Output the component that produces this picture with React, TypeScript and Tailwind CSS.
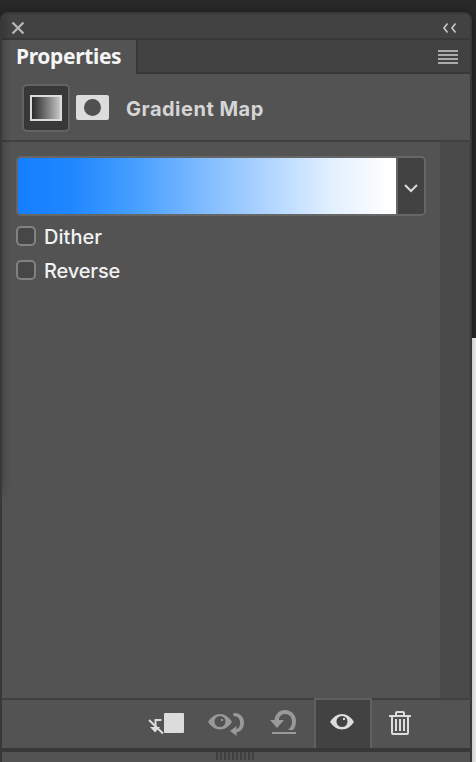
import React from 'react';

function MaskIcon() {
  return (
    <div className="ml-1.5 flex h-[25px] w-[33px] items-center justify-center rounded-[2px] bg-[#dcdcdc]">
      <div className="size-[17px] rounded-full bg-[#505050]" />
    </div>
  );
}

function Option({ label, className }: { label: string; className: string }) {
  return (
    <div className="flex h-[34px] items-center">
      <span className="size-5 rounded-[5px] border-2 border-[#828282] bg-[#474747]" />
      <span className={`mt-[2px] ml-2 text-[20px] leading-[34px] font-medium text-[#f2f2f2] ${className}`}>{label}</span>
    </div>
  );
}

function ClipIcon() {
  return (
    <svg className="h-[48px] w-[42px]" viewBox="146 700 42 48" fill="none">
      <rect x="164" y="713" width="20" height="20" rx="1" fill="#dcdcdc" />
      <path d="M161.5 720H155.5V728" stroke="#dcdcdc" strokeWidth="2" />
      <path d="M149 720L163 733.5" stroke="#dcdcdc" strokeWidth="2" />
      <path d="M150 727H160L155 732.5Z" fill="#dcdcdc" />
    </svg>
  );
}

function PreviousIcon() {
  return (
    <svg className="h-[48px] w-[42px]" viewBox="206 700 42 48" fill="none">
      <path fill="#999" d="M208 722Q213 714 220 714T232 722Q227 729.5 220 729.5T208 722Z" />
      <circle cx="220" cy="721.5" r="5.5" fill="#535353" />
      <rect x="221" y="719" width="2" height="2" fill="#999" />
      <path fill="#999" d="M233.5 713C240 712.5 244 717 244 722.5C244 728 241 731.5 236.5 732.5V736L230 731L236.5 726V729.5C239.5 728 240.5 725 240 721.5C239.5 718 237.5 716.2 233.5 716Z" />
    </svg>
  );
}

function ResetIcon() {
  return (
    <svg className="h-[48px] w-[34px]" viewBox="268 700 34 48" fill="none">
      <path fill="#999" d="M270 720H274.5C275 714 279.5 710 285 710C291.5 710 296 715 296 721C296 725 295 728 293 730H288C291 727.5 292 725 292 721C292 717 289 714 285 714C281.5 714 279 716.5 279 720H284L277 728Z" />
      <path d="M272 733H296" stroke="#999" strokeWidth="2" />
    </svg>
  );
}

function EyeIcon() {
  return (
    <svg className="h-6 w-7" viewBox="328 710 28 24" fill="none">
      <path fill="#dcdcdc" d="M330 722Q335 714 342 714T354 722Q349 729.5 342 729.5T330 722Z" />
      <circle cx="342" cy="721.5" r="5.5" fill="#424242" />
      <rect x="343" y="718" width="2" height="2" fill="#dcdcdc" />
    </svg>
  );
}

function TrashIcon() {
  return (
    <svg className="ml-[15px] h-[48px] w-[26px]" viewBox="387 700 26 48" fill="none" stroke="#dcdcdc" strokeWidth="2">
      <path d="M389 716H411M396 715.5V713Q396 712 397 712H403Q404 712 404 713V715.5M392 717V733Q392 734 393 734H407Q408 734 408 733V717" />
      <path d="M396 719V731M400 719V731M404 719V731" />
    </svg>
  );
}

export default function App() {
  return (
    <div className="relative flex h-[762px] w-[476px] overflow-hidden bg-[#292929] pt-3 font-['Inter','Liberation_Sans',sans-serif]">
      <div className="relative flex h-[750px] w-[472px] flex-col overflow-hidden rounded-t-[8px] border-x-2 border-t-2 border-[#383838] bg-[#535353] shadow-[0_0_8px_#1b1b1b]">
        <div className="pointer-events-none absolute top-0 left-0 h-[490px] w-2 bg-gradient-to-r from-black/15 to-transparent [mask-image:linear-gradient(to_bottom,black_94%,transparent)]" />
        <header className="flex h-[26px] shrink-0 items-center justify-between border-b-2 border-[#383838] bg-[#424242] pr-3 pl-[9px]">
          <svg className="mt-1 size-[14px]" viewBox="0 0 14 14" fill="none" stroke="#b5b5b5" strokeWidth="2.4">
            <path d="M1.5 1.5L12.5 12.5M12.5 1.5L1.5 12.5" />
          </svg>
          <svg className="mt-[3px] mr-[1px] h-3 w-4" viewBox="0 0 16 12" fill="none" stroke="#c4c4c4" strokeWidth="1.7">
            <path d="M6.5 1.5L3 6L6.5 10.5M14.5 1.5L11 6L14.5 10.5" />
          </svg>
        </header>
        <nav className="flex h-[34px] shrink-0">
          <div className="h-[34px] w-[134px] pl-[14px] font-['Noto_Sans','Open_Sans',sans-serif] text-[21px] leading-[32px] font-bold tracking-[-0.35px] text-[#f5f5f5]">Properties</div>
          <div className="flex flex-1 justify-end border-b-2 border-l-2 border-[#383838] bg-[#424242] pt-[10px] pr-3">
            <div className="flex h-[14px] w-5 flex-col justify-between">
              {[0, 1, 2, 3].map((n) => <span key={n} className="h-[2px] bg-[#aaa]" />)}
            </div>
          </div>
        </nav>
        <section className="flex h-[68px] shrink-0 items-start border-b-2 border-[#404040] pt-[10px] pl-5">
          <div className="flex size-12 items-center justify-center rounded-[5px] border-2 border-[#636363] bg-[#383838]">
            <div className="h-[26px] w-8 border-2 border-[#dcdcdc] bg-gradient-to-r from-[#2b2b2b] to-[#c8c8c8]" />
          </div>
          <div className="mt-[11px]"><MaskIcon /></div>
          <h1 className="mt-[13px] ml-[17px] text-[20px] leading-6 font-bold tracking-[0.5px] text-[#d5d5d5]">Gradient Map</h1>
        </section>
        <main className="flex h-[556px] shrink-0">
          <div className="flex-1 pt-[14px] pl-[14px]">
            <div className="flex h-[60px] w-[410px] overflow-hidden rounded-[5px] border-2 border-[#666]">
              <div className="w-[378px] bg-[linear-gradient(90deg,#147fff_0%,#1f87ff_14%,#479fff_31%,#82bdff_50%,#b6d8ff_68%,#e2f0ff_83%,#fff_98%)]" />
              <div className="flex flex-1 items-center justify-center border-l-2 border-[#666] bg-[#424242]">
                <svg className="mt-1 h-[10px] w-4" viewBox="0 0 16 10" fill="none" stroke="#dcdcdc" strokeWidth="2"><path d="M2 2L8 8L14 2" /></svg>
              </div>
            </div>
            <div className="pt-[3px]">
              <Option label="Dither" className="tracking-[0.05px]" />
              <Option label="Reverse" className="tracking-[-0.15px]" />
            </div>
          </div>
          <div className="w-[30px] bg-[#4a4a4a]" />
        </main>
        <footer className="flex h-[54px] shrink-0 border-t-2 border-b-4 border-t-[#404040] border-b-[#383838] pl-36">
          <ClipIcon />
          <div className="ml-[18px] flex"><PreviousIcon /></div>
          <div className="ml-5 flex"><ResetIcon /></div>
          <div className="-mt-[2px] ml-3 flex h-[50px] w-[58px] items-start justify-center border-x-2 border-t-2 border-[#606060] bg-[#424242] pt-[10px] pr-[2px]"><EyeIcon /></div>
          <TrashIcon />
        </footer>
        <div className="flex h-[10px] shrink-0 gap-[2px] pl-[214px]">
          {Array.from({ length: 10 }, (_, n) => <span key={n} className="h-2 w-[2px] bg-[#404040]" />)}
        </div>
      </div>
      <div className="absolute top-[338px] left-[472px] h-[424px] w-1 bg-gradient-to-r from-[#cfcfcf] to-[#e8e8e8]" />
    </div>
  );
}
